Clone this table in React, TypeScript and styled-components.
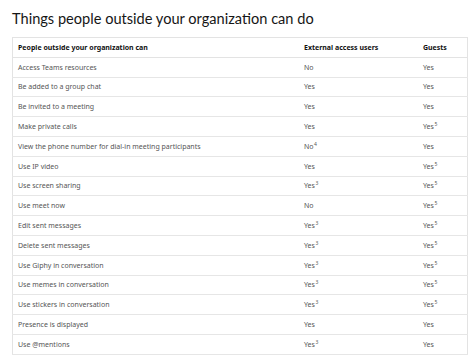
import styled, { createGlobalStyle } from "styled-components"

const GlobalStyle = createGlobalStyle`
    body {
        margin: 0;
        background: #fff;
        font-family: "Noto Sans", "Open Sans", sans-serif;
    }
`
const Page = styled.div`
    padding: 8px 6px 0 12px;
`
const Title = styled.h2`
    margin: 0 0 7px;
    font-family: Lato, "Noto Sans", sans-serif;
    font-size: 14.6px;
    font-weight: 400;
    line-height: 22px;
    color: #161616;
`
const Table = styled.table`
    width: 454px;
    border-collapse: collapse;
    table-layout: fixed;
    border: 1px solid #e3e3e3;
    font-size: 7px;
`
// widths are content widths: each cell adds 5px of left padding
const HeadCell = styled.th<{ $w: number }>`
    width: ${(p) => p.$w}px;
    height: 18.8px;
    padding: 0 0 0 5px;
    text-align: left;
    font-weight: 700;
    color: #111;
    border-bottom: 1px solid #e3e3e3;
`
const Cell = styled.td`
    height: 18.8px;
    padding: 0 0 0 5px;
    color: #555;
    border-bottom: 1px solid #e6e6e6;
    white-space: nowrap;
`
const Note = styled.sup`
    font-size: 5px;
    vertical-align: 3px;
    line-height: 0;
    margin-left: 0.5px;
`

type Val = [string, string?]

const rows: [string, Val, Val][] = [
    ["Access Teams resources", ["No"], ["Yes"]],
    ["Be added to a group chat", ["Yes"], ["Yes"]],
    ["Be invited to a meeting", ["Yes"], ["Yes"]],
    ["Make private calls", ["Yes"], ["Yes", "5"]],
    ["View the phone number for dial-in meeting participants", ["No", "4"], ["Yes"]],
    ["Use IP video", ["Yes"], ["Yes", "5"]],
    ["Use screen sharing", ["Yes", "3"], ["Yes", "5"]],
    ["Use meet now", ["No"], ["Yes", "5"]],
    ["Edit sent messages", ["Yes", "3"], ["Yes", "5"]],
    ["Delete sent messages", ["Yes", "3"], ["Yes", "5"]],
    ["Use Giphy in conversation", ["Yes", "3"], ["Yes", "5"]],
    ["Use memes in conversation", ["Yes", "3"], ["Yes", "5"]],
    ["Use stickers in conversation", ["Yes", "3"], ["Yes", "5"]],
    ["Presence is displayed", ["Yes"], ["Yes"]],
    ["Use @mentions", ["Yes", "3"], ["Yes"]],
]

const Value = ({ v }: { v: Val }) => (
    <Cell>
        {v[0]}
        {v[1] && <Note>{v[1]}</Note>}
    </Cell>
)

const App: React.FC = () => {
    return (
        <Page>
            <GlobalStyle />
            <Title>Things people outside your organization can do</Title>
            <Table>
                <thead>
                    <tr>
                        <HeadCell $w={281}>People outside your organization can</HeadCell>
                        <HeadCell $w={114}>External access users</HeadCell>
                        <HeadCell $w={44}>Guests</HeadCell>
                    </tr>
                </thead>
                <tbody>
                    {rows.map(([label, ext, guest]) => (
                        <tr key={label}>
                            <Cell>{label}</Cell>
                            <Value v={ext} />
                            <Value v={guest} />
                        </tr>
                    ))}
                </tbody>
            </Table>
        </Page>
    )
}

export default App
